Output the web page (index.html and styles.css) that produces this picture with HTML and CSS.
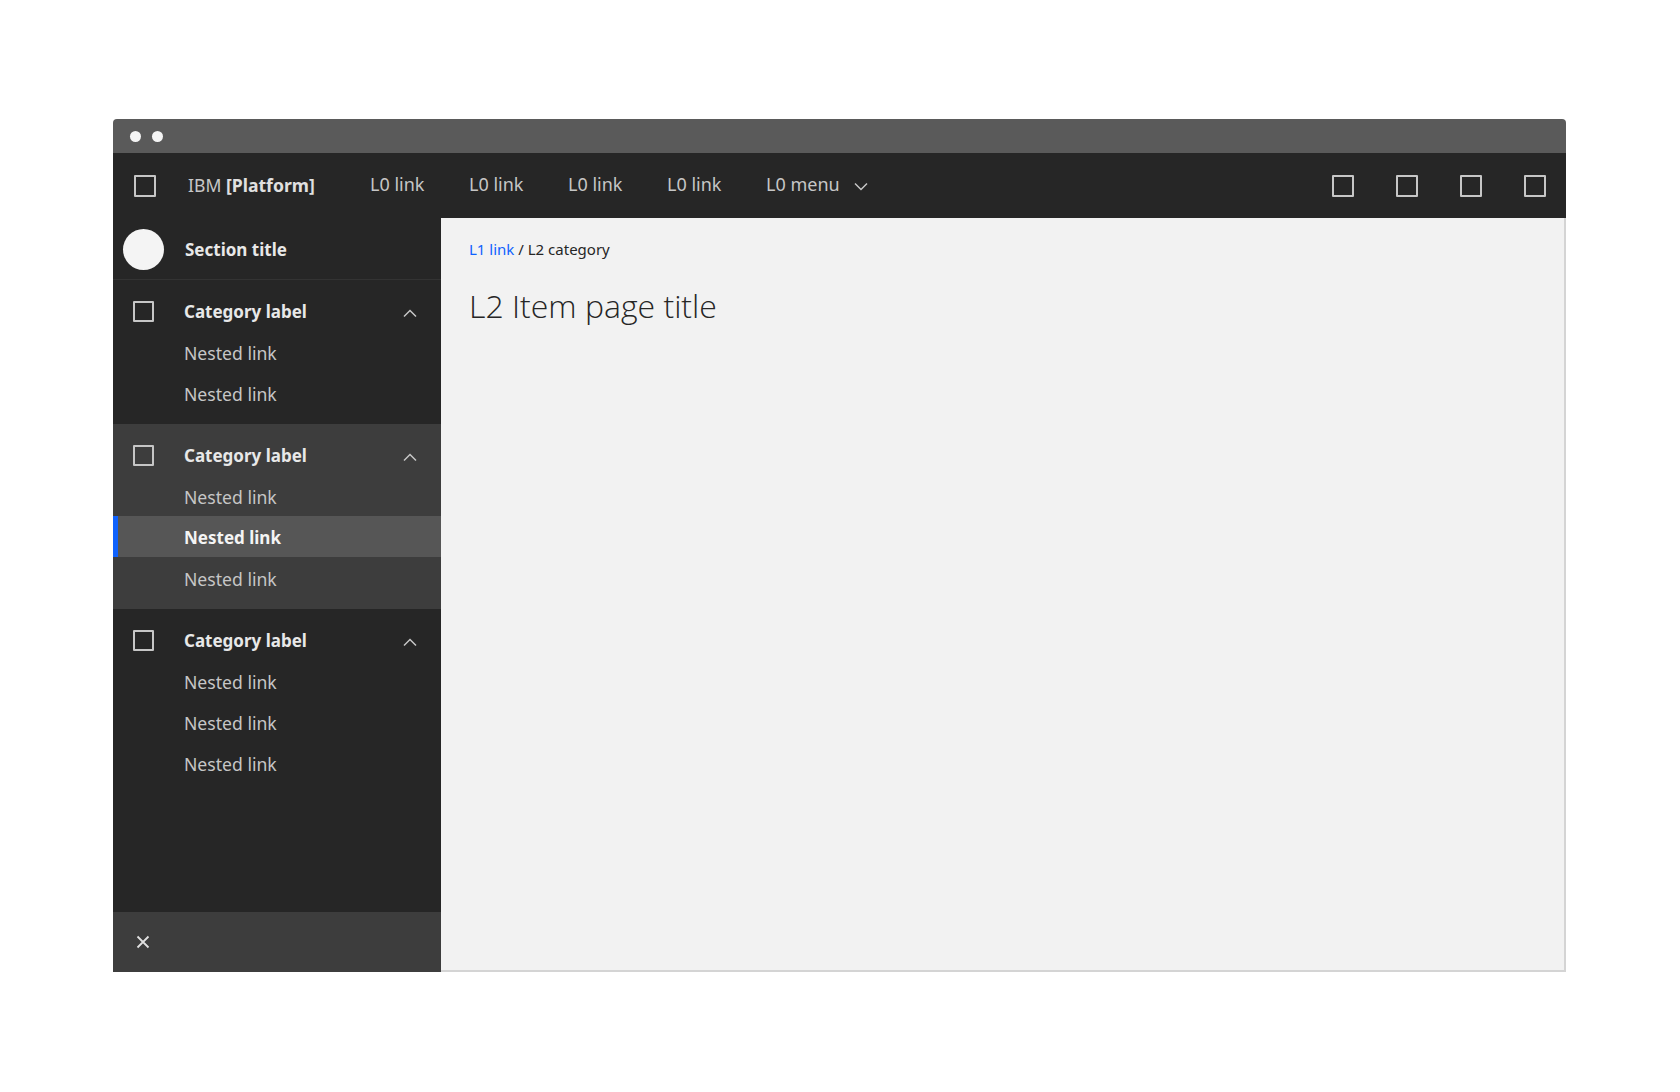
FILE: index.html
```html
<!DOCTYPE html>
<html lang="en">
<head>
<meta charset="utf-8">
<title>IBM Platform</title>
<link rel="stylesheet" href="styles.css">
</head>
<body>
<div class="window">
  <div class="titlebar">
    <span class="dot"></span>
    <span class="dot"></span>
  </div>
  <header class="header">
    <span class="box header-box"></span>
    <span class="brand">IBM <b>[Platform]</b></span>
    <nav class="l0-nav">
      <a class="l0-link">L0 link</a>
      <a class="l0-link">L0 link</a>
      <a class="l0-link">L0 link</a>
      <a class="l0-link">L0 link</a>
      <a class="l0-link l0-menu">L0 menu
        <svg class="chev-down" width="14" height="9" viewBox="0 0 14 9"><path d="M1 1.5 L7 7.5 L13 1.5" fill="none" stroke="#c6c6c6" stroke-width="1.5"/></svg>
      </a>
    </nav>
    <div class="actions">
      <span class="box"></span>
      <span class="box"></span>
      <span class="box"></span>
      <span class="box"></span>
    </div>
  </header>
  <div class="main">
    <aside class="sidenav">
      <div class="section-row">
        <span class="avatar"></span>
        <span class="section-title">Section title</span>
      </div>
      <div class="group">
        <div class="cat-row">
          <span class="box small-box"></span>
          <span class="cat-label">Category label</span>
          <svg class="chev-up" width="14" height="9" viewBox="0 0 14 9"><path d="M1 7.5 L7 1.5 L13 7.5" fill="none" stroke="#c6c6c6" stroke-width="1.5"/></svg>
        </div>
        <a class="nested">Nested link</a>
        <a class="nested">Nested link</a>
      </div>
      <div class="group group-active">
        <div class="cat-row">
          <span class="box small-box"></span>
          <span class="cat-label">Category label</span>
          <svg class="chev-up" width="14" height="9" viewBox="0 0 14 9"><path d="M1 7.5 L7 1.5 L13 7.5" fill="none" stroke="#c6c6c6" stroke-width="1.5"/></svg>
        </div>
        <a class="nested">Nested link</a>
        <a class="nested nested-selected">Nested link</a>
        <a class="nested">Nested link</a>
      </div>
      <div class="group">
        <div class="cat-row">
          <span class="box small-box"></span>
          <span class="cat-label">Category label</span>
          <svg class="chev-up" width="14" height="9" viewBox="0 0 14 9"><path d="M1 7.5 L7 1.5 L13 7.5" fill="none" stroke="#c6c6c6" stroke-width="1.5"/></svg>
        </div>
        <a class="nested">Nested link</a>
        <a class="nested">Nested link</a>
        <a class="nested">Nested link</a>
      </div>
      <div class="spacer"></div>
      <div class="footer">
        <svg class="close" width="14" height="14" viewBox="0 0 14 14"><path d="M1.5 1.5 L12.5 12.5 M12.5 1.5 L1.5 12.5" fill="none" stroke="#e0e0e0" stroke-width="1.8"/></svg>
      </div>
    </aside>
    <section class="content">
      <div class="breadcrumb"><a class="crumb-link">L1 link</a> / L2 category</div>
      <h1 class="page-title">L2 Item page title</h1>
    </section>
  </div>
</div>
</body>
</html>
```

FILE: styles.css
```css
* { box-sizing: border-box; }
html, body { margin: 0; padding: 0; background: #ffffff; }
body {
  font-family: "Noto Sans", "Open Sans", sans-serif;
  width: 1680px;
  height: 1092px;
  overflow: hidden;
}
.window {
  margin: 119px 0 0 113px;
  width: 1453px;
  height: 853px;
  display: flex;
  flex-direction: column;
  border-radius: 4px 4px 0 0;
  overflow: hidden;
}
.titlebar {
  height: 34px;
  background: #5a5a5a;
  display: flex;
  align-items: center;
  padding-left: 17px;
  gap: 11px;
  flex: none;
}
.dot {
  width: 11px;
  height: 11px;
  border-radius: 50%;
  background: #f4f4f4;
}
.header {
  height: 65px;
  background: #262626;
  display: flex;
  align-items: center;
  padding-left: 21px;
  padding-right: 20px;
  flex: none;
}
.box {
  display: block;
  width: 22px;
  height: 22px;
  border: 2px solid #c6c6c6;
  border-radius: 1px;
}
.small-box { width: 21px; height: 21px; }
.brand {
  margin-left: 32px;
  font-size: 17.6px;
  color: #c6c6c6;
  width: 182px;
  padding-bottom: 2px;
}
.brand b { color: #e0e0e0; font-weight: 700; }
.l0-nav { display: flex; align-items: center; }
.l0-link {
  width: 99px;
  font-size: 18px;
  color: #c6c6c6;
  display: flex;
  align-items: center;
  padding-bottom: 3px;
}
.l0-menu { width: auto; gap: 14px; }
.chev-down { display: block; margin-top: 4px; }
.actions {
  margin-left: auto;
  display: flex;
  gap: 42px;
}
.main {
  flex: 1;
  display: flex;
  min-height: 0;
}
.sidenav {
  width: 328px;
  background: #262626;
  display: flex;
  flex-direction: column;
  flex: none;
}
.section-row {
  height: 62px;
  display: flex;
  align-items: center;
  padding-left: 10px;
  padding-top: 1px;
  border-bottom: 1px solid #333333;
}
.avatar {
  width: 41px;
  height: 41px;
  border-radius: 50%;
  background: #f4f4f4;
}
.section-title {
  margin-left: 21px;
  font-size: 17px;
  font-weight: 700;
  color: #e8e8e8;
}
.group {
  padding: 11px 0 11px;
}
.group:first-of-type { padding-top: 12px; }
.group-active { background: #3d3d3d; }
.cat-row {
  height: 40px;
  display: flex;
  align-items: center;
  padding-left: 20px;
  padding-right: 24px;
  padding-top: 1px;
}
.cat-label {
  margin-left: 30px;
  font-size: 17px;
  font-weight: 700;
  color: #e8e8e8;
}
.chev-up { margin-left: auto; margin-top: 3px; display: block; }
.nested {
  height: 41px;
  display: flex;
  align-items: center;
  padding-left: 71px;
  padding-top: 2px;
  font-size: 17.6px;
  color: #c6c6c6;
}
.nested-selected {
  background: #565656;
  color: #f4f4f4;
  font-weight: 700;
  font-size: 17px;
  box-shadow: inset 5px 0 0 #0f62fe;
}
.spacer { flex: 1; }
.footer {
  height: 60px;
  background: #3d3d3d;
  display: flex;
  align-items: center;
  padding-left: 23px;
  flex: none;
}
.close { display: block; }
.content {
  flex: 1;
  background: #f2f2f2;
  border-right: 2px solid #d4d4d4;
  border-bottom: 2px solid #d4d4d4;
  padding: 20px 0 0 28px;
}
.breadcrumb {
  font-size: 15px;
  color: #262626;
  line-height: 22px;
}
.crumb-link { color: #0f62fe; }
.page-title {
  margin: 26px 0 0;
  font-family: "Open Sans", sans-serif;
  font-weight: 300;
  font-size: 32px;
  line-height: 40px;
  color: #262626;
}
```
